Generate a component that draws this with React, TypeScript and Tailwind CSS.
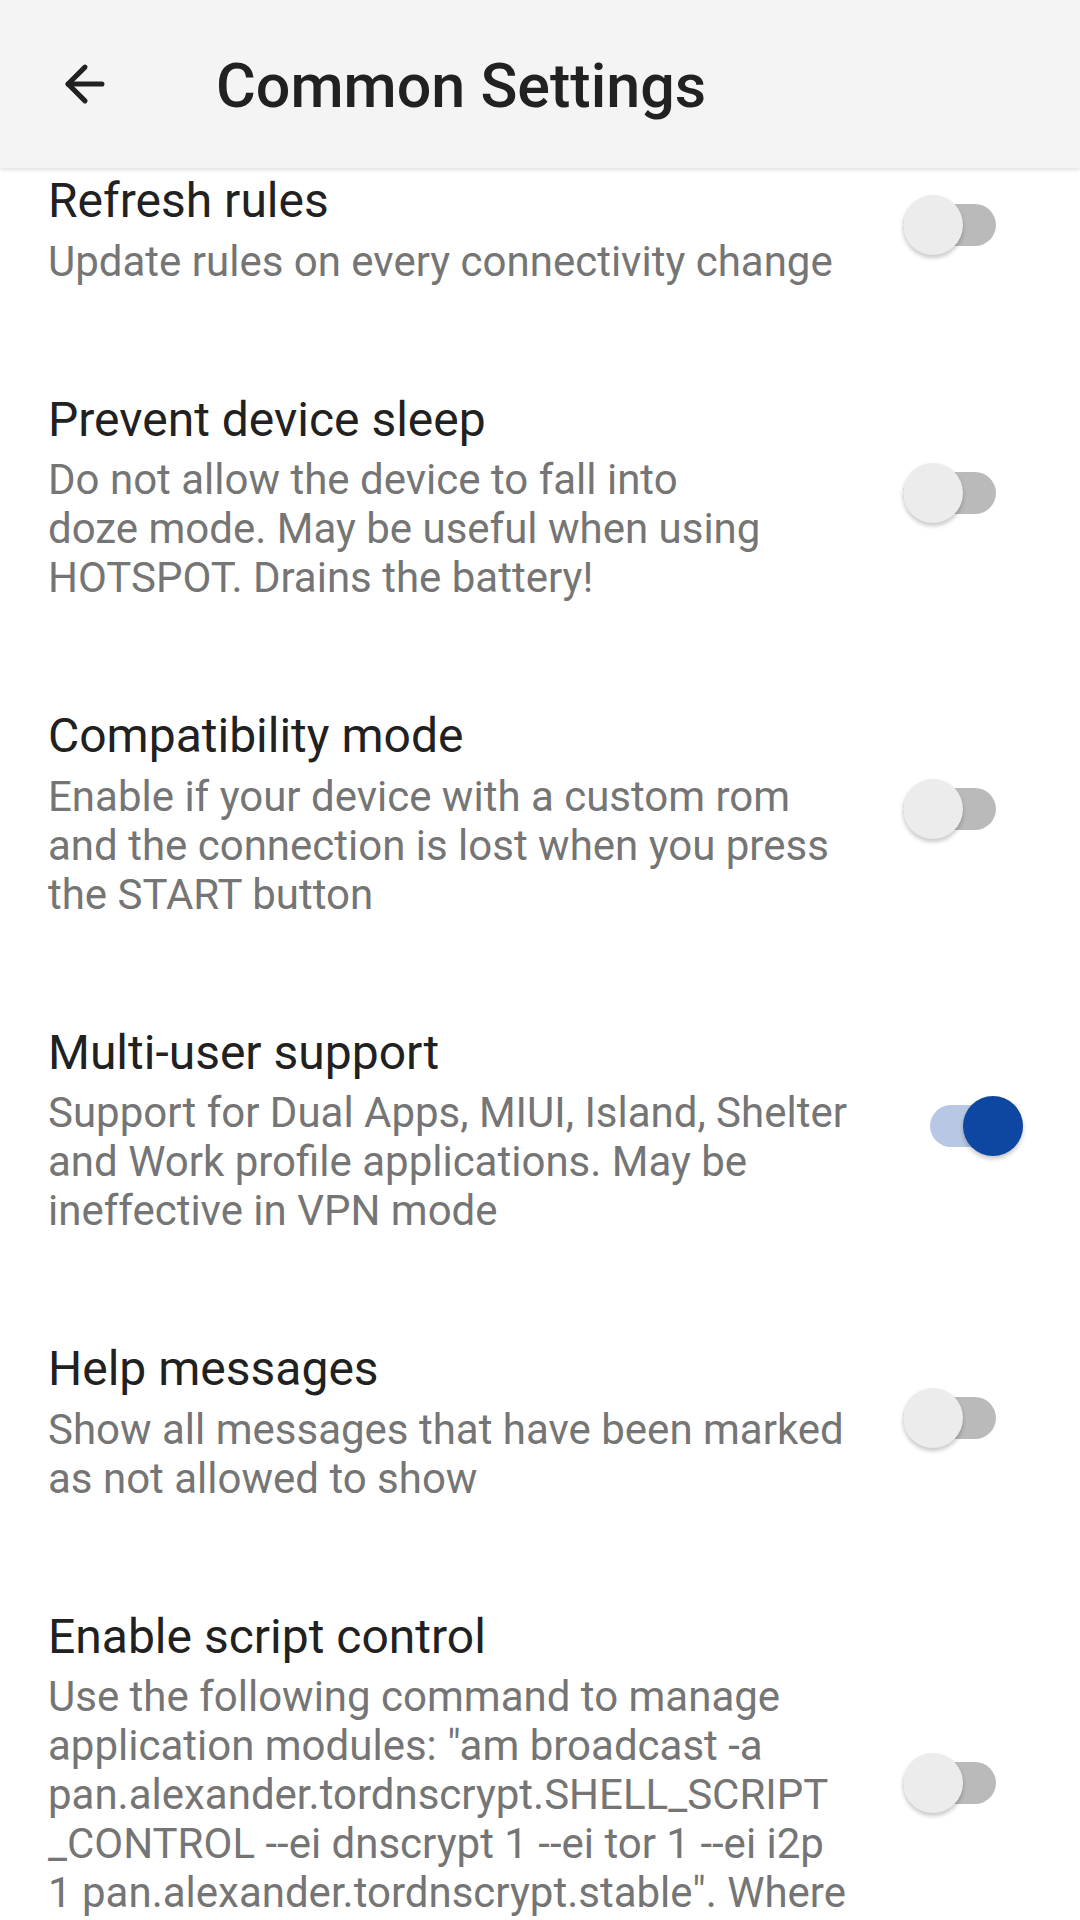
import { ArrowLeft } from 'lucide-react';

type Pref = { title: string; lines: string[]; on?: boolean };

const PREFS: Pref[] = [
  { title: 'Refresh rules', lines: ['Update rules on every connectivity change'] },
  {
    title: 'Prevent device sleep',
    lines: ['Do not allow the device to fall into', 'doze mode. May be useful when using', 'HOTSPOT. Drains the battery!'],
  },
  {
    title: 'Compatibility mode',
    lines: ['Enable if your device with a custom rom', 'and the connection is lost when you press', 'the START button'],
  },
  {
    title: 'Multi-user support',
    lines: ['Support for Dual Apps, MIUI, Island, Shelter', 'and Work profile applications. May be', 'ineffective in VPN mode'],
    on: true,
  },
  { title: 'Help messages', lines: ['Show all messages that have been marked', 'as not allowed to show'] },
  {
    title: 'Enable script control',
    lines: [
      'Use the following command to manage',
      'application modules: "am broadcast -a',
      'pan.alexander.tordnscrypt.SHELL_SCRIPT',
      '_CONTROL --ei dnscrypt 1 --ei tor 1 --ei i2p',
      '1 pan.alexander.tordnscrypt.stable". Where',
      '1 - start, 0 - stop.',
    ],
  },
];

function Toggle({ on }: { on?: boolean }) {
  return (
    <div className={`w-[120px] shrink-0 flex items-center pb-[8px] ${on ? 'justify-end' : 'justify-start'}`}>
      <div className={`relative h-[42px] w-[93px] rounded-full ${on ? 'bg-[#b7c7e4]' : 'bg-[#bababa]'}`}>
        <div
          className={`absolute top-1/2 -translate-y-1/2 h-[60px] w-[60px] rounded-full shadow-[0_3px_4px_rgba(0,0,0,0.22)] ${
            on ? 'right-0 bg-[#0d47a1]' : 'left-0 bg-[#ececec]'
          }`}
        />
      </div>
    </div>
  );
}

export default function App() {
  return (
    <div className="h-[1920px] w-[1080px] overflow-hidden bg-white flex flex-col font-['Roboto',sans-serif]">
      <header className="relative z-10 h-[168px] shrink-0 bg-[#f4f4f4] flex items-center shadow-[0_2px_4px_rgba(0,0,0,0.12)]">
        <div className="w-[216px] flex justify-start pl-[56px] text-[#212121]">
          <ArrowLeft className="w-[58px] h-[58px]" strokeWidth={2.1} />
        </div>
        <h1 className="text-[61px] leading-[168px] pt-[4px] font-medium text-[#212121]">Common Settings</h1>
      </header>
      <main className="flex-1 overflow-hidden">
        {/* list is scrolled a little under the toolbar */}
        <div className="-mt-[48px]">
          {PREFS.map(p => (
            <div key={p.title} className="flex items-center pl-[48px] pr-[57px] py-[53px]">
              <div className="flex-1 min-w-0">
                <div className="text-[48px] leading-[56px] text-[#212121] whitespace-nowrap">{p.title}</div>
                <div className="mt-[7.5px] text-[42px] leading-[49px] text-[#757575] whitespace-nowrap">
                  {p.lines.map(l => (
                    <div key={l}>{l}</div>
                  ))}
                </div>
              </div>
              <Toggle on={p.on} />
            </div>
          ))}
        </div>
      </main>
    </div>
  );
}
